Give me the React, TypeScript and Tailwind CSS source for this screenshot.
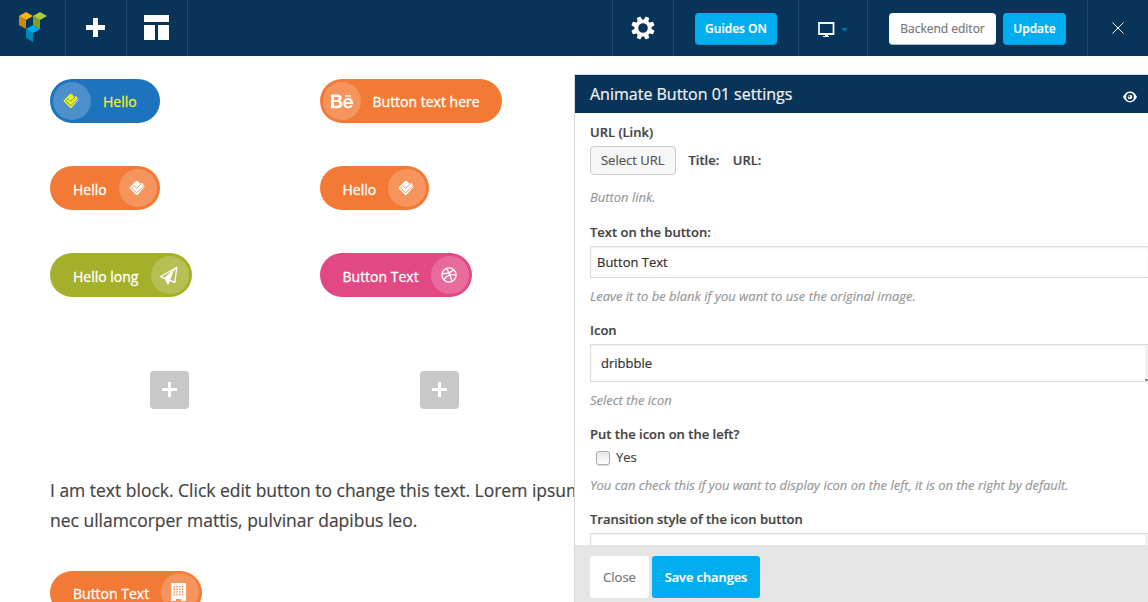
import { useId } from "react";
import type { ReactNode } from "react";
import { FaBehance } from "react-icons/fa";

function Logo() {
  return (
    <svg viewBox="0 0 28 30" className="h-[30px] w-7">
      <path d="M0 4 7 8v9L0 13z" fill="#c8890f" />
      <path d="M0 4 7 0l7 4-7 4z" fill="#fdb515" />
      <path d="M21 8v9l-7-4V4z" fill="#7fa028" />
      <path d="M14 4l7-4 7 4-7 4z" fill="#aacd3a" />
      <path d="M7 17l7 4v9l-7-4z" fill="#0086bb" />
      <path d="M7 17l7-4 7 4-7 4z" fill="#00adef" />
    </svg>
  );
}

function GearIcon() {
  return (
    <svg viewBox="0 0 24 24" className="h-6 w-6" fill="none" stroke="#fff">
      <circle cx="12" cy="12" r="6.7" strokeWidth="3.8" />
      <g fill="#fff" stroke="none">
        {[22.5, 67.5, 112.5, 157.5, 202.5, 247.5, 292.5, 337.5].map((a) => (
          <path key={a} d="M9.500 5 10 .8q.1-.5.6-.5h2.800q.5 0 .6.5L14.500 5z" transform={`rotate(${a} 12 12)`} />
        ))}
      </g>
    </svg>
  );
}

function CheckIcon() {
  const maskId = useId();
  return (
    <svg viewBox="0 0 16 16" className="h-4 w-4">
      <mask id={maskId}>
        <rect width="16" height="16" fill="#fff" />
        <path d="M2.600 7.900 7.700 12.700 15.800 5.200" fill="none" stroke="#000" strokeWidth="0.900" />
        <path d="M2.600 7.900 4.900 5.700 7.700 8.300 11.900 4" fill="none" stroke="#000" strokeWidth="0.900" />
      </mask>
      <path
        d="M7 1.100q.9-.9 1.800 0L11.600 4l1.600-1.100 1 1.100v1l1.300 1.300v.8L8.600 14.700q-.8.700-1.600 0L.8 8.600q-.7-.7 0-1.400z"
        fill="currentColor"
        mask={`url(#${maskId})`}
      />
    </svg>
  );
}

function PlaneIcon() {
  return (
    <svg viewBox="0 0 19 19" className="h-[19px] w-[19px]" fill="none" stroke="currentColor" strokeWidth="1.3" strokeLinejoin="round">
      <path d="M17.800 1.200 1.400 10.700 6 12.300 15.800 16.400z" />
      <path d="M17.800 1.200 6 12.300" />
      <path d="M14.500 5.500 6 12.300 8.800 18.200 11 14.200z" fill="currentColor" stroke="none" />
      <path d="M6 12.300 9 18 10.800 14.200z" fill="currentColor" />
    </svg>
  );
}

function DribbbleIcon() {
  return (
    <svg viewBox="0 0 16 16" className="h-4 w-4" fill="none" stroke="currentColor" strokeWidth="1.3">
      <circle cx="8" cy="8" r="7.1" />
      <path d="M5.200 1.500C8 5 9.900 9.200 10.800 14.400M1 6.700c4.700.1 8.800-.9 11.700-4M3 13c2-4.200 6.700-6.300 12-4.800" />
    </svg>
  );
}

function BuildingIcon() {
  return (
    <svg viewBox="0 0 15 18" className="mr-0.5 h-[18px] w-[15px]">
      <path d="M0 0h15v18h-5v-2H5v2H0z" fill="currentColor" />
      <g fill="#f3905c">
        {[3, 5.6, 8.2, 10.8].map((y) =>
          [2.5, 5.2, 8, 10.8].map((x) => <rect key={`${x}-${y}`} x={x} y={y} width="1.5" height="1.5" />),
        )}
      </g>
    </svg>
  );
}

interface PillProps {
  label: string;
  icon: ReactNode;
  className: string;
  iconLeft?: boolean;
}

function Pill({ label, icon, className, iconLeft }: PillProps) {
  const circle = (
    <span className="flex h-[38px] w-[38px] shrink-0 items-center justify-center rounded-full bg-white/20 pr-[2px]">
      {icon}
    </span>
  );
  return (
    <button
      className={`flex h-11 shrink-0 items-center rounded-full px-[3px] text-[14px] [-webkit-text-stroke:0.3px] ${className}`}
    >
      {iconLeft && circle}
      <span className={`whitespace-nowrap leading-5 ${iconLeft ? "ml-3 pt-px" : "ml-5 flex-1 pt-[3px] text-left"}`}>
        {label}
      </span>
      {!iconLeft && circle}
    </button>
  );
}

function AddTile() {
  return (
    <button className="flex h-[38px] w-[39px] items-center justify-center rounded bg-[#c8c8c8] pb-px">
      <svg viewBox="0 0 15 15" className="h-[15px] w-[15px]">
        <path d="M6 0h3v6h6v3H9v6H6V9H0V6h6z" fill="#fff" />
      </svg>
    </button>
  );
}

function TopBar() {
  return (
    <header className="flex h-14 shrink-0 bg-[#093459] text-[12px]">
      <div className="flex w-[66px] items-start border-r border-[#1c4b72] pl-[19px] pt-3">
        <Logo />
      </div>
      <div className="flex w-[61px] items-center border-r border-[#1c4b72] pb-px pl-5">
        <svg viewBox="0 0 19 19" className="h-[19px] w-[19px]">
          <path d="M7 0h5v7h7v5h-7v7H7v-7H0V7h7z" fill="#fff" />
        </svg>
      </div>
      <div className="flex w-[61px] items-center border-r border-[#1c4b72] pb-px pl-[17px]">
        <svg viewBox="0 0 25 25" className="h-[25px] w-[25px]">
          <path d="M0 0h25v7H0zM0 10h11v15H0zM14 10h11v15H14z" fill="#fff" />
        </svg>
      </div>
      <div className="flex-1" />
      <div className="flex w-[62px] items-center justify-center border-x border-[#1c4b72] pb-px pr-px">
        <GearIcon />
      </div>
      <div className="flex w-[125px] items-center border-r border-[#1c4b72] pl-[21px] pt-px">
        <button className="h-8 w-[82px] whitespace-nowrap rounded-sm border-b border-[#0398d3] bg-[#00aef0] pt-px font-semibold text-white [-webkit-text-stroke:0.2px]">
          Guides ON
        </button>
      </div>
      <div className="flex w-[69px] items-center gap-[6px] border-r border-[#1c4b72] pl-[19px] pt-[3px]">
        <svg viewBox="0 0 17 15" className="h-[15px] w-[17px]">
          <path d="M1 1h14.500v11H1z" fill="none" stroke="#f3f6f8" strokeWidth="1.800" />
          <path d="M7 12.500h3V14h1v1H5v-1h2z" fill="#f3f6f8" />
        </svg>
        <svg viewBox="0 0 7 4" className="h-1 w-[7px]">
          <path d="M0 0h7L3.500 3.500z" fill="#0473aa" />
        </svg>
      </div>
      <div className="flex w-[220px] items-center gap-[7px] border-r border-[#1c4b72] pl-[21px] pt-px">
        <button className="h-8 w-[107px] whitespace-nowrap rounded-sm border-b border-[#aebac5] bg-white pt-px text-[#777] [-webkit-text-stroke:0.2px]">
          Backend editor
        </button>
        <button className="h-8 w-[63px] rounded-sm border-b border-[#0398d3] bg-[#00aef0] pt-px font-semibold text-white [-webkit-text-stroke:0.2px]">
          Update
        </button>
      </div>
      <div className="flex w-[60px] items-center justify-center pb-px pr-px">
        <svg viewBox="0 0 12 12" className="h-3 w-3" stroke="#fff" strokeWidth="1">
          <path d="M.5.5l11 11M11.500.5l-11 11" />
        </svg>
      </div>
    </header>
  );
}

function Canvas() {
  return (
    <main className="w-[574px] shrink-0 overflow-hidden pl-[50px] pt-[23px]">
      <div className="flex">
        <div className="flex w-[269.5px] flex-col gap-[43px]">
          <Pill iconLeft label="Hello" className="w-[109.5px] bg-[#1e73be] text-[#eeee22]" icon={<CheckIcon />} />
          <Pill label="Hello" className="w-[109.5px] bg-[#f37a35] text-white" icon={<CheckIcon />} />
          <Pill label="Hello long" className="w-[141.5px] bg-[#a4b029] text-white" icon={<PlaneIcon />} />
        </div>
        <div className="flex flex-col gap-[43px]">
          <Pill
            iconLeft
            label="Button text here"
            className="w-[182.5px] bg-[#f37a35] text-white"
            icon={<FaBehance className="ml-[3px] h-[21px] w-[22px]" />}
          />
          <Pill label="Hello" className="w-[109.5px] bg-[#f37a35] text-white" icon={<CheckIcon />} />
          <Pill label="Button Text" className="w-[152px] bg-[#e24884] text-white" icon={<DribbbleIcon />} />
        </div>
      </div>
      <div className="mt-[74px] flex gap-[231px] pl-[100px]">
        <AddTile />
        <AddTile />
      </div>
      <p className="mt-[66px] whitespace-nowrap text-[17.48px] leading-[30px] text-[#444] [-webkit-text-stroke:0.2px]">
        I am text block. Click edit button to change this text. Lorem ipsum
        <br />
        nec ullamcorper mattis, pulvinar dapibus leo.
      </p>
      <div className="mt-9">
        <Pill label="Button Text" className="w-[152px] bg-[#f37a35] pb-[2px] text-white" icon={<BuildingIcon />} />
      </div>
    </main>
  );
}

function Label({ children, className = "" }: { children: ReactNode; className?: string }) {
  return <div className={`font-semibold leading-[18px] text-[#444] ${className}`}>{children}</div>;
}

function Hint({ children, className = "" }: { children: ReactNode; className?: string }) {
  return <div className={`text-[12.98px] italic leading-[18px] text-[#999] ${className}`}>{children}</div>;
}

function SettingsPanel() {
  return (
    <aside className="mt-[18px] flex min-w-0 flex-1 flex-col border-l border-t border-[#d9d9d9] bg-white text-[13px] [-webkit-text-stroke:0.2px]">
      <div className="flex h-[38px] shrink-0 items-center justify-between bg-[#093459] pl-[15px] pr-[11px]">
        <h2 className="text-[16px] font-normal text-[#f2f2f2]">Animate Button 01 settings</h2>
        <svg viewBox="0 0 14 12" className="mt-[5px] h-3 w-[14px]">
          <path d="M0 6Q2.800.6 7 .6T14 6Q11.200 11.400 7 11.400T0 6z" fill="#fff" />
          <circle cx="7" cy="6" r="3.900" fill="#093459" />
          <circle cx="7" cy="6" r="2.300" fill="#fff" />
          <circle cx="6.300" cy="5.300" r="1" fill="#093459" />
        </svg>
      </div>
      <div className="min-h-0 flex-1 overflow-hidden whitespace-nowrap pl-[15px] pt-[10px]">
        <Label>URL (Link)</Label>
        <div className="mt-[5px] flex h-[29px] items-center font-semibold text-[#444]">
          <button className="h-[29px] w-[85.5px] rounded-sm border border-[#ccc] bg-[#f7f7f7] font-normal text-[#555]">
            Select URL
          </button>
          <span className="ml-[13px]">Title:</span>
          <span className="ml-[13.5px]">URL:</span>
        </div>
        <Hint className="mt-[13px]">Button link.</Hint>
        <Label className="mt-[17px]">Text on the button:</Label>
        <div className="mt-[5px] flex h-8 items-center border-y border-l border-[#ddd] pl-[6px] pt-0.5 text-[#333] shadow-[inset_0_1px_2px_rgba(0,0,0,0.07)]">
          Button Text
        </div>
        <Hint className="mt-[9px]">Leave it to be blank if you want to use the original image.</Hint>
        <Label className="mt-4">Icon</Label>
        <div className="mt-[5px] flex h-[38px] items-stretch justify-between border-y border-l border-[#ddd] text-[#333] shadow-[inset_0_1px_2px_rgba(0,0,0,0.07)]">
          <span className="self-center pl-[10px] pt-0.5">dribbble</span>
          <span className="flex w-[3px] flex-col justify-end bg-[#f2f2f2]">
            <span className="h-0.5 bg-[#888]" />
          </span>
        </div>
        <Hint className="mt-[9px]">Select the icon</Hint>
        <Label className="mt-4">Put the icon on the left?</Label>
        <div className="mt-[5px] flex h-[18px] items-center pl-[6px] text-[#444]">
          <span className="mt-[2px] h-[14px] w-[14px] rounded-[3px] border border-[#aaa] bg-gradient-to-b from-[#e8e8e8] to-white shadow-[0_1px_1px_rgba(0,0,0,0.15)]" />
          <span className="ml-[6px] leading-[18px]">Yes</span>
        </div>
        <Hint className="mt-[10px]">
          You can check this if you want to display icon on the left, it is on the right by default.
        </Hint>
        <Label className="mt-4">Transition style of the icon button</Label>
        <div className="mt-[5px] flex h-[38px] justify-end border-y border-l border-[#ddd] shadow-[inset_0_1px_2px_rgba(0,0,0,0.07)]">
          <span className="w-[3px] bg-[#f2f2f2]" />
        </div>
      </div>
      <div className="flex h-[57px] shrink-0 gap-[3px] bg-[#e5e5e5] pl-[15px] pt-[11px]">
        <button className="h-[42px] w-[59px] rounded-[3px] bg-white pt-px text-[#777]">Close</button>
        <button className="h-[42px] w-[108px] rounded-[3px] bg-[#00aef0] pt-px text-[12.8px] font-semibold text-white">
          Save changes
        </button>
      </div>
    </aside>
  );
}

export default function App() {
  return (
    <div className="flex h-[602px] w-[1148px] flex-col overflow-hidden bg-white font-['Open_Sans',sans-serif]">
      <TopBar />
      <div className="flex min-h-0 flex-1">
        <Canvas />
        <SettingsPanel />
      </div>
    </div>
  );
}
